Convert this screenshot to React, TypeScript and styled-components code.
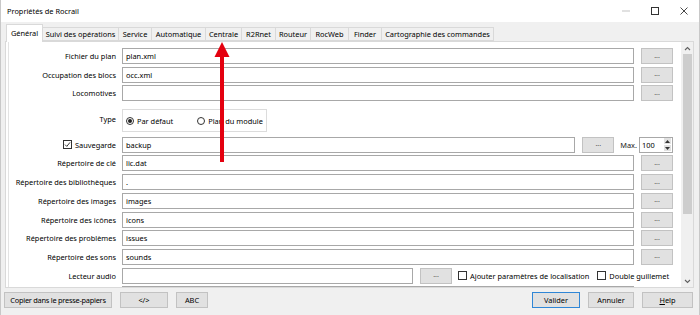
import React from 'react'
import styled, { createGlobalStyle } from 'styled-components'

const GlobalStyle = createGlobalStyle`
  html, body {
    margin: 0;
    padding: 0;
    background: #f0f0f0;
  }
  body {
    font-family: 'Noto Sans', 'Segoe UI', sans-serif;
    font-size: 7.4px;
    color: #000;
  }
`

const Window = styled.div`
  position: relative;
  width: 700px;
  height: 315px;
  box-sizing: border-box;
  display: flex;
  flex-direction: column;
  background: #f0f0f0;
  border-left: 1px solid #c8c8c8;
  border-right: 1px solid #c8c8c8;
  overflow: hidden;
`

const TitleBar = styled.div`
  height: 22px;
  flex: none;
  display: flex;
  align-items: center;
  background: #fff;
  padding-left: 6px;
`

const Title = styled.div`
  flex: 1;
`

const Controls = styled.div`
  display: flex;
  align-items: center;
  height: 100%;
`

const ControlBtn = styled.div<{ $w: number }>`
  width: ${(p) => p.$w}px;
  height: 100%;
  display: flex;
  align-items: center;
  justify-content: center;
`

const TabStrip = styled.div`
  display: flex;
  align-items: flex-end;
  height: 17px;
  margin-top: 2px;
  padding-left: 5px;
  position: relative;
  z-index: 1;
`

const Tab = styled.div<{ $active?: boolean; $w: number }>`
  box-sizing: border-box;
  width: ${(p) => p.$w + 1}px;
  height: ${(p) => (p.$active ? 18 : 14)}px;
  margin-right: -1px;
  margin-bottom: ${(p) => (p.$active ? -1 : 0)}px;
  display: flex;
  align-items: center;
  justify-content: center;
  padding-bottom: ${(p) => (p.$active ? 2 : 0)}px;
  border: 1px solid #d9d9d9;
  border-bottom: ${(p) => (p.$active ? 'none' : '1px solid #d9d9d9')};
  background: ${(p) => (p.$active ? '#fff' : '#f0f0f0')};
  white-space: nowrap;
  position: relative;
  z-index: ${(p) => (p.$active ? 2 : 1)};
`

const Panel = styled.div`
  margin: 0 5px 0 4px;
  height: 247px;
  box-sizing: border-box;
  border: 1px solid #d9d9d9;
  background: #fff;
  padding: 0 0 0 2px;
  display: flex;
`

const ScrollArea = styled.div`
  flex: 1;
  display: flex;
  border-left: 1px solid #e3e3e3;
  overflow: hidden;
`

const Form = styled.div`
  flex: 1;
  display: grid;
  grid-template-columns: 107px 1fr;
  column-gap: 6px;
  row-gap: 2.7px;
  align-content: start;
  align-items: center;
  padding: 6px 8px 0 0;
  height: 100%;
  box-sizing: border-box;
  overflow: hidden;
`

const Label = styled.div`
  display: flex;
  justify-content: flex-end;
  align-items: center;
  white-space: nowrap;
`

const Field = styled.div`
  display: flex;
  align-items: center;
  gap: 7px;
`

const Input = styled.div<{ $w?: number }>`
  box-sizing: border-box;
  height: 16px;
  ${(p) => (p.$w ? `width: ${p.$w}px; flex: none;` : 'flex: 1;')}
  border: 1px solid #a8a8a8;
  background: #fff;
  padding-left: 3px;
  display: flex;
  align-items: center;
`

const CutRow = styled.div`
  grid-column: 2;
  height: 4px;
  margin-right: 39px;
  border-top: 1px solid #a8a8a8;
  border-left: 1px solid #a8a8a8;
  border-right: 1px solid #a8a8a8;
`

const Button = styled.div<{ $w: number; $default?: boolean; $tight?: boolean }>`
  box-sizing: border-box;
  min-width: ${(p) => p.$w}px;
  height: 16px;
  flex: none;
  padding: 0 ${(p) => (p.$tight ? 0 : 1)}px;
  background: #e1e1e1;
  border: 1px solid ${(p) => (p.$default ? '#2f86d6' : '#c2c2c2')};
  display: flex;
  align-items: center;
  justify-content: center;
  white-space: nowrap;
  letter-spacing: ${(p) => (p.$tight ? '-0.25px' : 'normal')};
`

const Dots = styled.span`
  color: #555;
  font-size: 7px;
  margin-top: -2px;
`

const Mnemonic = styled.span`
  text-decoration: underline;
`

const GroupBox = styled.div`
  box-sizing: border-box;
  width: 145px;
  height: 23px;
  margin: 5px 0 2px;
  border: 1px solid #dcdcdc;
  display: flex;
  align-items: center;
  padding-left: 3px;
  gap: 24px;
`

const Radio = styled.span<{ $on?: boolean }>`
  box-sizing: border-box;
  width: 8px;
  height: 8px;
  border-radius: 50%;
  border: 1px solid #333;
  display: inline-flex;
  align-items: center;
  justify-content: center;
  margin-right: 3px;
  &::after {
    content: '';
    width: 4px;
    height: 4px;
    border-radius: 50%;
    background: ${(p) => (p.$on ? '#222' : 'transparent')};
  }
`

const Choice = styled.label<{ $gap?: number }>`
  display: flex;
  align-items: center;
  white-space: nowrap;
  margin-left: ${(p) => p.$gap ?? 0}px;
`

const Check = styled.span`
  box-sizing: border-box;
  width: 9px;
  height: 9px;
  border: 1px solid #333;
  background: #fff;
  margin-right: 3px;
  display: inline-flex;
  align-items: center;
  justify-content: center;
`

const MaxLabel = styled.span`
  margin-left: -1px;
  color: #222;
`

const Spinner = styled.div`
  box-sizing: border-box;
  width: 34px;
  height: 16px;
  flex: none;
  margin-left: -5px;
  border: 1px solid #a8a8a8;
  display: flex;
  align-items: center;
  padding-left: 2px;
  justify-content: space-between;
`

const SpinArrows = styled.div`
  display: flex;
  flex-direction: column;
  gap: 1px;
  margin-right: 1px;
`

const SpinArrow = styled.div`
  width: 7px;
  height: 6px;
  background: #e1e1e1;
  display: flex;
  align-items: center;
  justify-content: center;
`

const ScrollBar = styled.div`
  width: 12px;
  flex: none;
  background: #f0f0f0;
  display: flex;
  flex-direction: column;
  align-items: center;
`

const ScrollThumb = styled.div`
  width: 9px;
  height: 160px;
  background: #cdcdcd;
`

const ScrollBtn = styled.div`
  height: 12px;
  display: flex;
  align-items: center;
  justify-content: center;
`

const Footer = styled.div`
  display: flex;
  align-items: center;
  padding: 4px 6px 0 3px;
  gap: 8px;
`

const Spacer = styled.div`
  flex: 1;
`

const Overlay = styled.svg`
  position: absolute;
  left: 0;
  top: 0;
  pointer-events: none;
`

const tabs: [string, number][] = [
  ['Général', 36],
  ['Suivi des opérations', 76],
  ['Service', 33],
  ['Automatique', 54],
  ['Centrale', 36],
  ['R2Rnet', 34],
  ['Routeur', 35],
  ['RocWeb', 38],
  ['Finder', 33],
  ['Cartographie des commandes', 112],
]

const browseRows = [
  ['Répertoire de clé', 'lic.dat'],
  ['Répertoire des bibliothèques', '.'],
  ['Répertoire des images', 'images'],
  ['Répertoire des icônes', 'icons'],
  ['Répertoire des problèmes', 'issues'],
  ['Répertoire des sons', 'sounds'],
]

const Browse = () => (
  <Button $w={32}>
    <Dots>...</Dots>
  </Button>
)

const CheckMark = () => (
  <svg width="7" height="7" viewBox="0 0 7 7">
    <path d="M1 3.6 L2.8 5.4 L6 1.4" stroke="#222" strokeWidth="0.9" fill="none" />
  </svg>
)

const Chevron = ({ up }: { up?: boolean }) => (
  <svg width="7" height="5" viewBox="0 0 7 5">
    <path
      d={up ? 'M1 4 L3.5 1.5 L6 4' : 'M1 1 L3.5 3.5 L6 1'}
      stroke="#606060"
      strokeWidth="1.1"
      fill="none"
    />
  </svg>
)

const App: React.FC = () => {
  return (
    <Window>
      <GlobalStyle />
      <TitleBar>
        <Title>Propriétés de Rocrail</Title>
        <Controls>
          <ControlBtn $w={30}>
            <svg width="8" height="2">
              <rect x="0" y="0.5" width="8" height="1" fill="#c4c4c4" />
            </svg>
          </ControlBtn>
          <ControlBtn $w={28}>
            <svg width="8" height="8">
              <rect x="0.5" y="0.5" width="7" height="7" stroke="#333" fill="none" />
            </svg>
          </ControlBtn>
          <ControlBtn $w={30}>
            <svg width="8" height="8">
              <path d="M0.5 0.5 L7.5 7.5 M7.5 0.5 L0.5 7.5" stroke="#333" strokeWidth="0.9" />
            </svg>
          </ControlBtn>
        </Controls>
      </TitleBar>

      <TabStrip>
        {tabs.map(([t, w], i) => (
          <Tab key={t} $w={w} $active={i === 0}>
            {t}
          </Tab>
        ))}
      </TabStrip>

      <Panel>
        <ScrollArea>
          <Form>
            <Label>Fichier du plan</Label>
            <Field>
              <Input>plan.xml</Input>
              <Browse />
            </Field>
            <Label>Occupation des blocs</Label>
            <Field>
              <Input>occ.xml</Input>
              <Browse />
            </Field>
            <Label>Locomotives</Label>
            <Field>
              <Input />
              <Browse />
            </Field>

            <Label>Type</Label>
            <GroupBox>
              <Choice>
                <Radio $on />
                Par défaut
              </Choice>
              <Choice>
                <Radio />
                Plan du module
              </Choice>
            </GroupBox>

            <Label>
              <Choice>
                <Check>
                  <CheckMark />
                </Check>
                Sauvegarde
              </Choice>
            </Label>
            <Field>
              <Input>backup</Input>
              <Browse />
              <MaxLabel>Max.</MaxLabel>
              <Spinner>
                100
                <SpinArrows>
                  <SpinArrow>
                    <svg width="5" height="3">
                      <path d="M0 3 L2.5 0 L5 3 Z" fill="#333" />
                    </svg>
                  </SpinArrow>
                  <SpinArrow>
                    <svg width="5" height="3">
                      <path d="M0 0 L2.5 3 L5 0 Z" fill="#333" />
                    </svg>
                  </SpinArrow>
                </SpinArrows>
              </Spinner>
            </Field>

            {browseRows.map(([label, value]) => (
              <React.Fragment key={label}>
                <Label>{label}</Label>
                <Field>
                  <Input>{value}</Input>
                  <Browse />
                </Field>
              </React.Fragment>
            ))}

            <Label>Lecteur audio</Label>
            <Field>
              <Input $w={291} />
              <Browse />
              <Choice $gap={-1}>
                <Check />
                Ajouter paramètres de localisation
              </Choice>
              <Choice $gap={1}>
                <Check />
                Double guillemet
              </Choice>
            </Field>

            <CutRow />
          </Form>
          <ScrollBar>
            <ScrollBtn>
              <Chevron up />
            </ScrollBtn>
            <ScrollThumb />
            <Spacer />
            <ScrollBtn>
              <Chevron />
            </ScrollBtn>
          </ScrollBar>
        </ScrollArea>
      </Panel>

      <Footer>
        <Button $w={108} $tight>
          Copier dans le presse-papiers
        </Button>
        <Button $w={48}>&lt;/&gt;</Button>
        <Button $w={32}>ABC</Button>
        <Spacer />
        <Button $w={48} $default>
          Valider
        </Button>
        <Button $w={46}>Annuler</Button>
        <Button $w={51}>
          <Mnemonic>H</Mnemonic>elp
        </Button>
      </Footer>

      <Overlay width="700" height="315">
        <rect x="219" y="54" width="4" height="108" fill="#e4000f" />
        <polygon points="221,42 213.5,57 228.5,57" fill="#e4000f" />
      </Overlay>
    </Window>
  )
}

export default App
